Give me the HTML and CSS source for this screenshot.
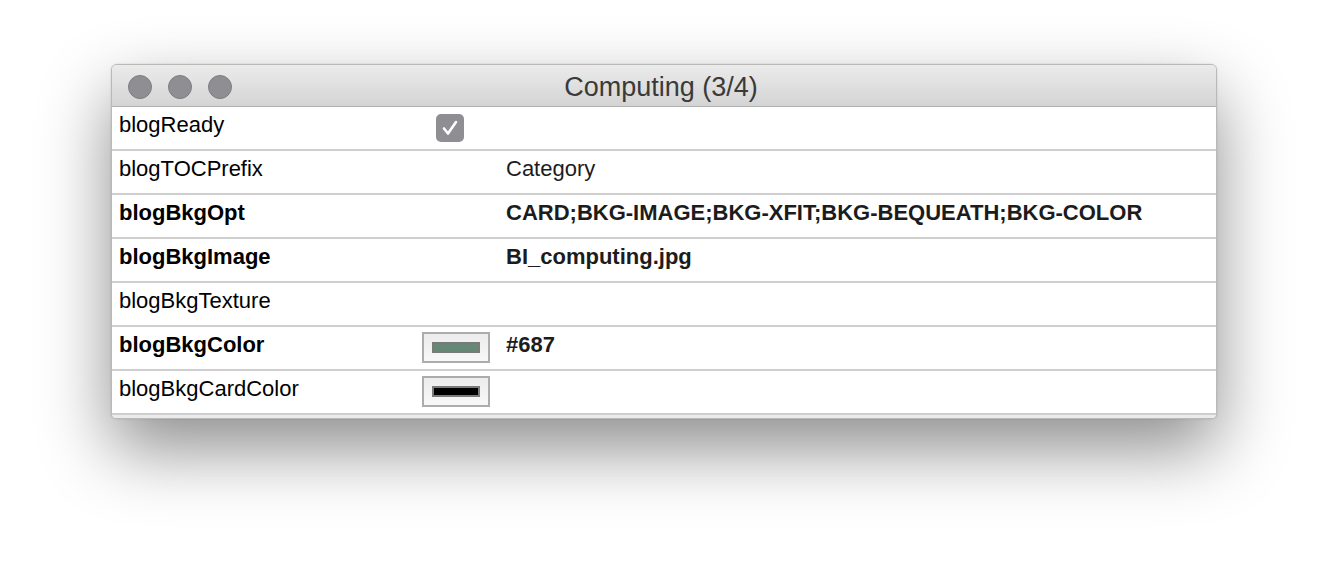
FILE: index.html
```html
<!DOCTYPE html>
<html>
<head>
<meta charset="utf-8">
<link rel="stylesheet" href="styles.css">
</head>
<body>
<div class="window">
  <div class="titlebar">
    <div class="lights">
      <span class="light"></span><span class="light"></span><span class="light"></span>
    </div>
    <div class="title">Computing (3/4)</div>
  </div>
  <div class="rows">
    <div class="row">
      <div class="name">blogReady</div>
      <div class="mid"><span class="check"><svg width="28" height="28" viewBox="0 0 28 28"><path d="M8 14.5 L12 19.5 L20 8" fill="none" stroke="#fff" stroke-width="2.6" stroke-linecap="round" stroke-linejoin="round"/></svg></span></div>
      <div class="value"></div>
    </div>
    <div class="row">
      <div class="name">blogTOCPrefix</div>
      <div class="mid"></div>
      <div class="value">Category</div>
    </div>
    <div class="row bold">
      <div class="name">blogBkgOpt</div>
      <div class="mid"></div>
      <div class="value">CARD;BKG-IMAGE;BKG-XFIT;BKG-BEQUEATH;BKG-COLOR</div>
    </div>
    <div class="row bold">
      <div class="name">blogBkgImage</div>
      <div class="mid"></div>
      <div class="value">BI_computing.jpg</div>
    </div>
    <div class="row">
      <div class="name">blogBkgTexture</div>
      <div class="mid"></div>
      <div class="value"></div>
    </div>
    <div class="row bold">
      <div class="name">blogBkgColor</div>
      <div class="mid"><span class="swatch"><span class="chip" style="background:#668877"></span></span></div>
      <div class="value">#687</div>
    </div>
    <div class="row">
      <div class="name">blogBkgCardColor</div>
      <div class="mid"><span class="swatch"><span class="chip" style="background:#000000"></span></span></div>
      <div class="value"></div>
    </div>
  </div>
  <div class="footer"></div>
</div>
</body>
</html>
```
FILE: styles.css
```css
html, body {
  margin: 0;
  background: #ffffff;
}
body {
  box-sizing: border-box;
  min-height: 580px;
  padding: 64px 0 0 111px;
  font-family: "Liberation Sans", Arial, sans-serif;
}
.window {
  width: 1104px;
  border: 1px solid #b9b9b9;
  border-radius: 6px 6px 5px 5px;
  background: #ffffff;
  overflow: hidden;
  box-shadow: 0 30px 70px rgba(0, 0, 0, 0.45), 0 0 2px rgba(0,0,0,0.15);
}
.titlebar {
  height: 41px;
  border-bottom: 1px solid #b1b1b1;
  background: linear-gradient(#ebebeb, #d4d4d4);
  display: flex;
  align-items: center;
  position: relative;
}
.lights {
  display: flex;
  gap: 16px;
  padding-left: 16px;
  padding-top: 2px;
}
.light {
  width: 22px;
  height: 22px;
  border-radius: 50%;
  background: #8f8e93;
  border: 1px solid #7e7d82;
}
.title {
  position: absolute;
  left: 0;
  right: 0;
  top: 0;
  bottom: 0;
  display: flex;
  align-items: center;
  justify-content: center;
  font-size: 27px;
  color: #3a3a3a;
  padding-top: 3px;
  padding-right: 6px;
}
.row {
  height: 42px;
  border-bottom: 2px solid #cecece;
  display: flex;
  font-size: 22px;
  line-height: 26px;
  color: #000;
}
.row.bold {
  font-weight: bold;
}
.name {
  width: 303px;
  padding-left: 7px;
  padding-top: 5px;
}
.mid {
  width: 84px;
  padding-top: 5px;
}
.value {
  flex: 1;
  padding-top: 5px;
  color: #1c1c1c;
}
.check {
  display: block;
  width: 28px;
  height: 28px;
  margin-left: 14px;
  margin-top: 2px;
  border-radius: 5px;
  background: #8e8e93;
}
.check svg {
  display: block;
}
.swatch {
  display: flex;
  align-items: center;
  justify-content: center;
  width: 64px;
  height: 27px;
  border: 2px solid #acacac;
  background: linear-gradient(#ececec, #f8f8f8);
}
.chip {
  display: block;
  width: 44px;
  height: 7px;
  border: 2px solid #7a7a7a;
}
.footer {
  height: 3px;
  background: #ebebeb;
}
```
